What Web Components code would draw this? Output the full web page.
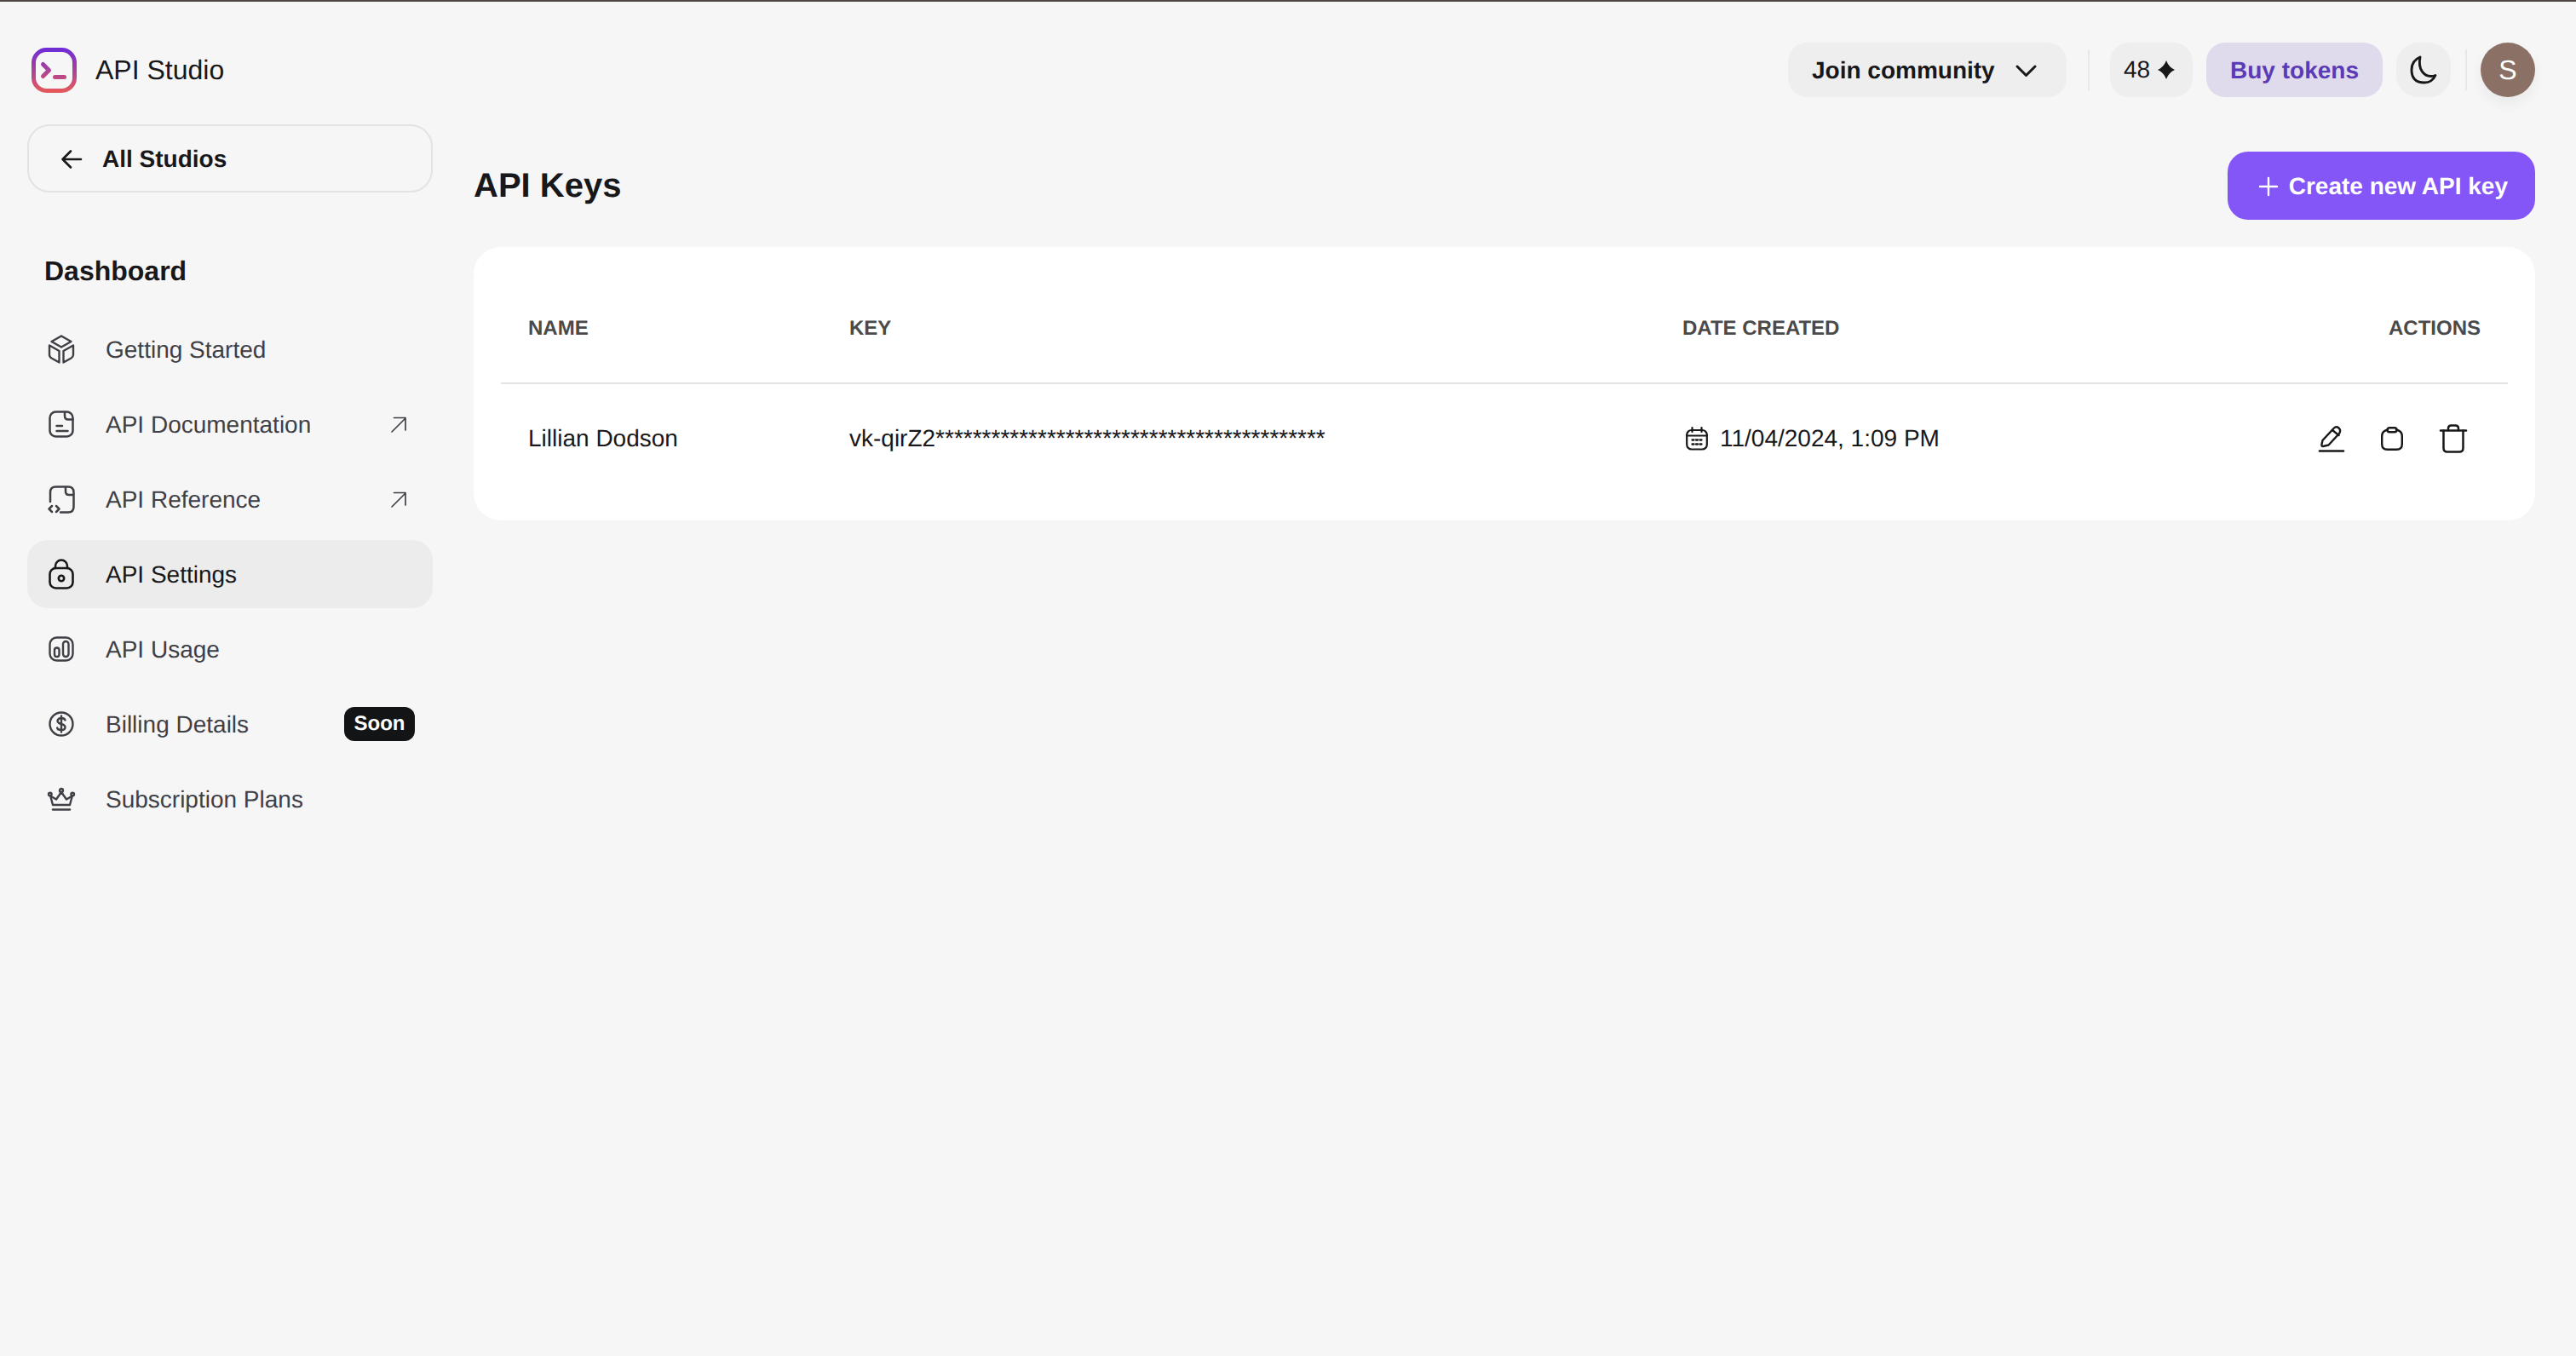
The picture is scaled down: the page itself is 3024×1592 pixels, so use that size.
<!DOCTYPE html>
<html lang="en">
<head>
<meta charset="utf-8">
<title>API Studio</title>
<style>
	html, body { margin: 0; background: #f6f6f6; }
	body { font-family: "Liberation Sans", Arial, sans-serif; color: #18181b; text-rendering: geometricPrecision; }
</style>
</head>
<body>
<api-app></api-app>

<script>
// all icons live here, drawn on the pixel box given by w/h
const ICONS = {
	back: { w: 24, h: 22, sw: 2.6, d: '<path d="M11 1.500 1.500 11l9.500 9.500M1.500 11h21.500"/>' },
	cube: { w: 32, h: 34, sw: 2.4, d: '<path d="M16 1.5 27.5 8 16 14.5 4.5 8Z"/><path d="M2 12.5 13.5 19v13.5l-9-5Q2 26 2 23.5Z"/><path d="M30 12.5 18.5 19v13.5l9-5q2.5-1.5 2.5-4Z"/>' },
	doc: { w: 30, h: 32, sw: 2.5, d: '<rect x="1.5" y="1.5" width="27" height="29" rx="7"/><path d="M19 2v4q0 4.500 4 4.500h5.500M9.500 18h6.500M9.500 24h13"/>' },
	ref: { w: 32, h: 33, sw: 2.5, d: '<path d="M3 19V8q0-6.500 6.500-6.500H24q6.500 0 6.500 6.500v17q0 6.500-6.500 6.500H15"/><path d="M21 2v5q0 4 4 4h5M5 24l-3.500 3.500L5 31M10 24l3.500 3.500L10 31"/>' },
	lock: { w: 30, h: 36, sw: 2.6, d: '<rect x="1.500" y="11" width="27" height="23.500" rx="7"/><path d="M8 11V8.500a7 7 0 0 1 14 0V11"/><circle cx="15" cy="23" r="3.200"/>' },
	usage: { w: 30, h: 30, sw: 2.4, d: '<rect x="1.500" y="1.500" width="27" height="27" rx="8"/><rect x="7" y="13.500" width="5.500" height="10.500" rx="2.700"/><rect x="17" y="6" width="6.500" height="18" rx="3.200"/>' },
	dollar: { w: 30, h: 30, sw: 2.4, d: '<circle cx="15" cy="15" r="13.500"/><path d="M19.500 10.500Q18.500 8 15 8t-4.500 3q0 3 4.500 4t4.500 4-4.500 3-4.800-2.500M15 5.500v19"/>' },
	crown: { w: 32, h: 27, sw: 2.4, d: '<circle cx="16" cy="3" r="2"/><circle cx="2.800" cy="7.500" r="1.800"/><circle cx="29.200" cy="7.500" r="1.800"/><path d="M16 5l-6 8.500L3.200 9.500 6 20h20l2.800-10.500-6.800 4L16 5Z"/><path d="M6 25.500h20"/>' },
	out: { w: 18, h: 19, sw: 1.700, d: '<path d="M1 18 17 2M3.500 1.500H17V16"/>' },
	chevron: { w: 25, h: 14, sw: 3, d: '<path d="m2 2 10.500 10.500L23 2"/>' },
	star: { w: 20, h: 22, sw: 0, fill: '#18181b', d: '<path d="M10 0q3 8 10 11-7 3-10 11-3-8-10-11 7-3 10-11Z"/>' },
	moon: { w: 32, h: 34, sw: 2.900, d: '<path d="M12 2Q2 6 2 17q0 15 15 15 9 0 13-8.500-2 1-5.500 1C17 24.500 9 17 12 2Z"/>' },
	plus: { w: 22, h: 22, sw: 2.400, d: '<path d="M11 1v20M1 11h20"/>' },
	calendar: { w: 26, h: 28, sw: 2.200, d: '<rect x="1.200" y="4" width="23.600" height="22.500" rx="5.500"/><path d="M1.200 10.500h23.600M7.500 1v5M18.500 1v5"/><path stroke-width="2.300" stroke-dasharray="2 2.500" d="M7.500 15.500h11M7.500 20.500h11"/>' },
	pencil: { w: 28, h: 32, sw: 2.400, d: '<path d="M3.500 18 16.500 4q3-3 6-.5t.5 6.500L10.500 23.500l-6.500 1.500Q2 25 2.500 22.500Z"/><path d="m15 6 7.500 6"/><path stroke-width="2.600" d="M0 30.500h28"/>' },
	clipboard: { w: 26, h: 28, sw: 2.400, d: '<path d="M8 3.500Q1.200 5 1.200 11v9.500q0 6.300 6.300 6.300h11q6.300 0 6.300-6.300V11Q24.800 5 18 3.500"/><rect x="7.500" y="1.200" width="11" height="5" rx="2.500"/>' },
	trash: { w: 30, h: 34, sw: 2.500, d: '<path d="M0 7.500h30"/><path d="M9 7V5q0-3.500 3.500-3.500h5Q21 1.500 21 5v2"/><path d="M3.500 7.500V28q0 4.500 4.500 4.500h14q4.500 0 4.500-4.500V7.500"/>' }
};

class AppIcon extends HTMLElement {
	connectedCallback() {
		const i = ICONS[this.getAttribute('name')];
		const root = this.shadowRoot || this.attachShadow({ mode: 'open' });
		root.innerHTML = `
		<style>
			:host { display: inline-flex; flex: none; line-height: 0; }
			svg { display: block; overflow: visible; }
		</style>
		<svg width="${i.w}" height="${i.h}" viewBox="0 0 ${i.w} ${i.h}" fill="${i.fill || 'none'}"
			stroke="${i.sw ? 'currentColor' : 'none'}" stroke-width="${i.sw}"
			stroke-linecap="round" stroke-linejoin="round">${i.d}</svg>`;
	}
}
customElements.define('app-icon', AppIcon);

class AppLogo extends HTMLElement {
	constructor() {
		super();
		this.attachShadow({ mode: 'open' }).innerHTML = `
		<style>
			:host { display: flex; align-items: center; gap: 22px; font-size: 32px; color: #18181b; padding-left: 5px; }
			svg { display: block; }
		</style>
		<svg width="53" height="53" viewBox="0 0 53 53" fill="none" stroke="url(#lg)" stroke-linecap="round" stroke-linejoin="round">
			<defs>
				<linearGradient id="lg" gradientUnits="userSpaceOnUse" x1="26" y1="0" x2="26" y2="53">
					<stop offset="0" stop-color="#6c2bd9"/>
					<stop offset="1" stop-color="#e85a58"/>
				</linearGradient>
			</defs>
			<rect x="2.500" y="2.500" width="48" height="48" rx="15" stroke-width="5"/>
			<path d="M13.500 19.500 20.500 26.500 13.500 33.500" stroke-width="5"/>
			<path d="M27.500 34.500h11" stroke-width="5"/>
		</svg>
		<span>API Studio</span>`;
	}
}
customElements.define('app-logo', AppLogo);

class TopBar extends HTMLElement {
	constructor() {
		super();
		this.attachShadow({ mode: 'open' }).innerHTML = `
		<style>
			:host { display: flex; align-items: center; height: 64px; font-size: 28px; color: #18181b; }
			.pill { display: flex; align-items: center; height: 64px; box-sizing: border-box; border-radius: 22px; background: #eeeeee; }
			.join { width: 327px; padding: 1px 0 0 28px; gap: 24px; font-weight: 700; }
			.sep { width: 2px; height: 48px; background: #e8e8e8; }
			.tokens { width: 97px; padding-left: 16px; gap: 9px; margin-left: 24px; }
			.buy { width: 207px; justify-content: center; padding-top: 1px; margin-left: 16px; background: #dfdaec; color: #5b3bb5; font-weight: 700; }
			.theme { width: 64px; justify-content: center; margin: 0 17px 0 16px; border-radius: 26px; }
			.avatar { width: 64px; justify-content: center; margin-left: 16px; border-radius: 50%; background: #8b7066; color: #fff; font-size: 32px; box-shadow: 0 8px 16px rgba(0,0,0,.05); }
			.first-sep { margin: 0 0 0 25px; }
		</style>
		<div class="pill join">Join community <app-icon name="chevron"></app-icon></div>
		<div class="sep first-sep"></div>
		<div class="pill tokens">48 <app-icon name="star"></app-icon></div>
		<div class="pill buy">Buy tokens</div>
		<div class="pill theme"><app-icon name="moon"></app-icon></div>
		<div class="sep"></div>
		<div class="pill avatar">S</div>`;
	}
}
customElements.define('top-bar', TopBar);

class NavItem extends HTMLElement {
	constructor() {
		super();
		this.attachShadow({ mode: 'open' }).innerHTML = `
		<style>
			:host { display: flex; align-items: center; height: 80px; padding: 0 21px 0 24px; border-radius: 24px; font-size: 28px; color: #3f3f46; }
			:host([active]) { background: #ececec; color: #18181b; }
			.ico { display: flex; justify-content: center; width: 32px; margin-right: 36px; }
			.txt { flex: 1; padding-top: 1px; }
			.out { display: flex; margin-right: 10px; }
		</style>
		<span class="ico"></span><span class="txt"><slot></slot></span><slot name="end"></slot>`;
	}
	connectedCallback() {
		const ico = document.createElement('app-icon');
		ico.setAttribute('name', this.getAttribute('icon'));
		this.shadowRoot.querySelector('.ico').appendChild(ico);
		if (this.hasAttribute('external')) {
			const box = document.createElement('span');
			box.className = 'out';
			box.innerHTML = '<app-icon name="out"></app-icon>';
			this.shadowRoot.appendChild(box);
		}
	}
}
customElements.define('nav-item', NavItem);

class SoonBadge extends HTMLElement {
	constructor() {
		super();
		this.attachShadow({ mode: 'open' }).innerHTML = `
		<style>
			:host { display: flex; align-items: center; justify-content: center; width: 83px; height: 40px; border-radius: 12px; background: #131416; color: #fff; font-size: 24px; font-weight: 700; }
		</style>
		<slot></slot>`;
	}
}
customElements.define('soon-badge', SoonBadge);

class SideNav extends HTMLElement {
	constructor() {
		super();
		this.attachShadow({ mode: 'open' }).innerHTML = `
		<style>
			:host { display: block; padding-top: 32px; }
			.back { display: flex; align-items: center; gap: 24px; height: 80px; box-sizing: border-box; padding: 1px 0 0 38px; border: 2px solid #e3e3e3; border-radius: 26px; font-size: 28px; font-weight: 700; color: #18181b; }
			h2 { margin: 76px 0 36px 20px; font-size: 32px; line-height: 32px; color: #18181b; }
			.items { display: flex; flex-direction: column; gap: 8px; }
		</style>
		<div class="back"><app-icon name="back"></app-icon>All Studios</div>
		<h2>Dashboard</h2>
		<div class="items">
			<nav-item icon="cube">Getting Started</nav-item>
			<nav-item icon="doc" external>API Documentation</nav-item>
			<nav-item icon="ref" external>API Reference</nav-item>
			<nav-item icon="lock" active>API Settings</nav-item>
			<nav-item icon="usage">API Usage</nav-item>
			<nav-item icon="dollar">Billing Details<soon-badge slot="end">Soon</soon-badge></nav-item>
			<nav-item icon="crown">Subscription Plans</nav-item>
		</div>`;
	}
}
customElements.define('side-nav', SideNav);

class KeysTable extends HTMLElement {
	constructor() {
		super();
		this.attachShadow({ mode: 'open' }).innerHTML = `
		<style>
			:host { display: block; margin-top: 32px; padding: 32px; background: #fff; border-radius: 32px; font-size: 28px; color: #18181b; }
			.grid { display: grid; grid-template-columns: 377px 978px 1fr 1fr; grid-template-rows: 129px 128px; align-items: center; }
			.grid > div { padding: 0 32px; }
			.head { font-size: 24px; font-weight: 700; color: #4a4a4a; align-self: stretch; display: flex; align-items: center; border-bottom: 2px solid #e3e3e3; }
			.right { justify-content: flex-end; }
			.date { display: flex; align-items: center; gap: 14px; padding-left: 36px !important; }
			.acts { display: flex; justify-content: flex-end; align-items: center; gap: 44px; padding-right: 49px !important; }
			.key { white-space: nowrap; }
		</style>
		<div class="grid">
			<div class="head">NAME</div>
			<div class="head">KEY</div>
			<div class="head">DATE CREATED</div>
			<div class="head right">ACTIONS</div>
			<div>Lillian Dodson</div>
			<div class="key">vk-qirZ2******************************************</div>
			<div class="date"><app-icon name="calendar"></app-icon>11/04/2024, 1:09 PM</div>
			<div class="acts"><app-icon name="pencil"></app-icon><app-icon name="clipboard"></app-icon><app-icon name="trash"></app-icon></div>
		</div>`;
	}
}
customElements.define('keys-table', KeysTable);

class ApiApp extends HTMLElement {
	constructor() {
		super();
		this.attachShadow({ mode: 'open' }).innerHTML = `
		<style>
			:host { display: block; min-height: 1592px; box-sizing: border-box; border-top: 2px solid #4f4543; }
			header { display: flex; align-items: center; justify-content: space-between; margin-top: 48px; padding: 0 48px 0 32px; }
			.body { display: grid; grid-template-columns: 476px 1fr; column-gap: 48px; padding: 0 48px 0 32px; }
			main { padding-top: 64px; }
			.title { display: flex; align-items: center; justify-content: space-between; }
			h1 { margin: 1px 0 0; font-size: 40px; color: #18181b; }
			.create { display: flex; align-items: center; gap: 13px; height: 80px; box-sizing: border-box; padding: 1px 32px 0 37px; border-radius: 24px; background: #8455f7; color: #fff; font-size: 28px; font-weight: 700; }
		</style>
		<header><app-logo></app-logo><top-bar></top-bar></header>
		<div class="body">
			<side-nav></side-nav>
			<main>
				<div class="title">
					<h1>API Keys</h1>
					<div class="create"><app-icon name="plus"></app-icon>Create new API key</div>
				</div>
				<keys-table></keys-table>
			</main>
		</div>`;
	}
}
customElements.define('api-app', ApiApp);
</script>
</body>
</html>
